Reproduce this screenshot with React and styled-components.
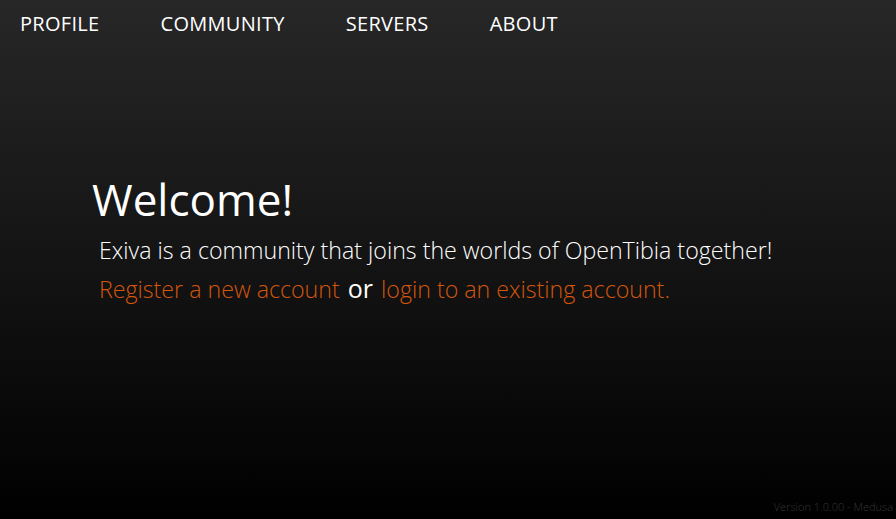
import React from "react";
import styled, { createGlobalStyle } from "styled-components";

const GlobalStyle = createGlobalStyle`
  html, body {
    margin: 0;
    height: 100%;
  }
  body {
    font-family: "Open Sans", "Segoe UI", sans-serif;
    font-weight: 300;
    color: #fff;
    background: #000;
  }
  #root {
    height: 100%;
  }
`;

const navItems = ["PROFILE", "COMMUNITY", "SERVERS", "ABOUT"];

const App = () => {
  return (
    <>
      <GlobalStyle />
      <Page>
        <Nav>
          {navItems.map((item) => (
            <NavLink key={item} href="#">
              {item}
            </NavLink>
          ))}
        </Nav>

        <Main>
          <Title>Welcome!</Title>
          <Lead>Exiva is a community that joins the worlds of OpenTibia together!</Lead>
          <Lead>
            <Link href="#">Register a new account</Link> <Or>or</Or>{" "}
            <Link href="#">login to an existing account.</Link>
          </Lead>
        </Main>

        <Footer>Version 1.0.00 - Medusa</Footer>
      </Page>
    </>
  );
};

export default App;

const Page = styled.div`
  height: 100%;
  display: flex;
  flex-direction: column;
  background: linear-gradient(to bottom, #272727 0%, #141414 50%, #000 100%);
`;

const Nav = styled.nav`
  display: flex;
  gap: 61px;
  padding: 10px 20px 0;
  height: 35px;
`;

const NavLink = styled.a`
  color: #fff;
  text-decoration: none;
  font-size: 20px;
  font-weight: 400;
  letter-spacing: 0.3px;
  line-height: 28px;
`;

const Main = styled.main`
  flex: 1;
  padding: 124px 0 0 92px;
`;

const Title = styled.h1`
  margin: 0 0 2px;
  font-size: 44px;
  font-weight: 400;
  line-height: 60px;
`;

const Lead = styled.p`
  margin: 0 0 0 7px;
  font-size: 23.2px;
  line-height: 38px;
`;

const Link = styled.a`
  color: #d4560c;
  text-decoration: none;
`;

const Or = styled.span`
  margin: 0 2px;
  font-weight: 400;
  font-size: 25px;
`;

const Footer = styled.footer`
  align-self: flex-end;
  padding: 0 3px 5px 0;
  font-size: 11px;
  color: #353535;
`;
